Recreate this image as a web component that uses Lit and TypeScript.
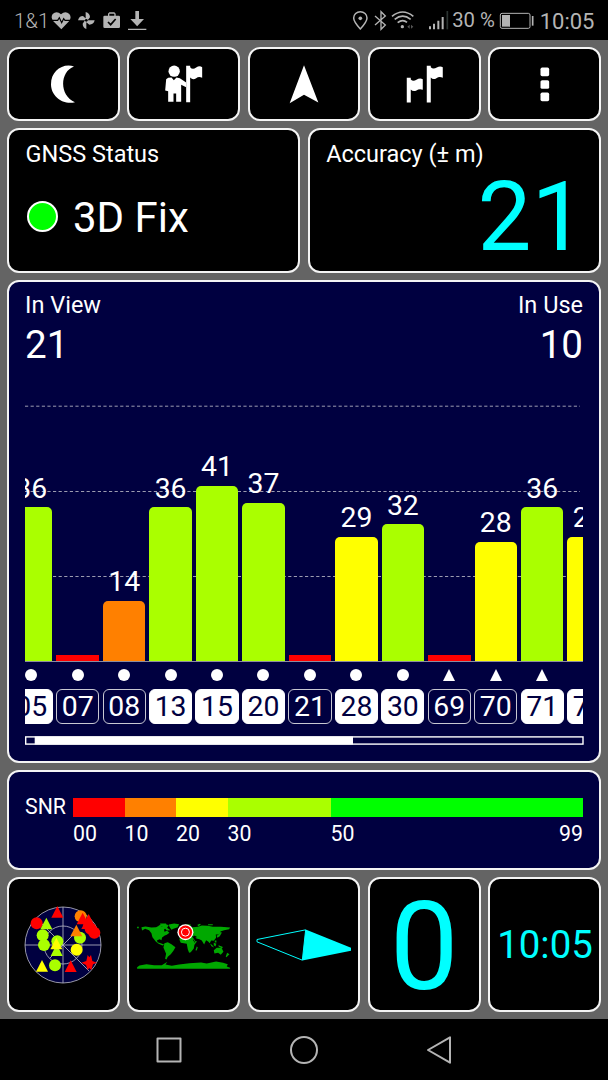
import { LitElement, html, css, svg } from "lit";
import { customElement, property } from "lit/decorators.js";
import { classMap } from "lit/directives/class-map.js";

type Sat = { id: string; snr: number; used: boolean; kind: "dot" | "tri" };

const SATS: Sat[] = [
  { id: "05", snr: 36, used: true, kind: "dot" },
  { id: "07", snr: 0, used: false, kind: "dot" },
  { id: "08", snr: 14, used: false, kind: "dot" },
  { id: "13", snr: 36, used: true, kind: "dot" },
  { id: "15", snr: 41, used: true, kind: "dot" },
  { id: "20", snr: 37, used: true, kind: "dot" },
  { id: "21", snr: 0, used: false, kind: "dot" },
  { id: "28", snr: 29, used: true, kind: "dot" },
  { id: "30", snr: 32, used: true, kind: "dot" },
  { id: "69", snr: 0, used: false, kind: "tri" },
  { id: "70", snr: 28, used: false, kind: "tri" },
  { id: "71", snr: 36, used: true, kind: "tri" },
  { id: "72", snr: 29, used: true, kind: "tri" },
];

const PX_PER_DB = 4.265;

const snrColor = (v: number) =>
  v < 10 ? "#ff0000" : v < 20 ? "#ff8000" : v < 30 ? "#ffff00" : v < 50 ? "#aaff00" : "#00ff00";

@customElement("sat-chart")
class SatChart extends LitElement {
  @property({ attribute: false }) sats: Sat[] = [];

  static styles = css`
    :host { display: block; }
    .view { display: grid; overflow: hidden; height: 330px; width: 558px; }
    .grid, .cols { grid-area: 1 / 1; }
    .grid { display: block; width: 558px; height: 330px; }
    .cols { display: flex; gap: 4px; margin-left: -15px; }
    .col { flex: none; width: 42.46px; display: flex; flex-direction: column; align-items: center; }
    .plot { height: 267px; width: 100%; display: flex; flex-direction: column; justify-content: flex-end; align-items: center; }
    .val { font-size: 28.4px; line-height: 28px; margin-bottom: 4.8px; }
    .bar { width: 42.5px; border-radius: 5px 5px 0 0; flex: none; }
    .bar.low { border-radius: 0; }
    .mark { width: 12px; height: 12px; margin: 8px 0 8px; display: block; flex: none; }
    .id {
      box-sizing: border-box; width: 43.2px; height: 35px; flex: none; border: 1px solid #c8c8d2; border-radius: 6px;
      display: flex; align-items: center; justify-content: center; font-size: 28.4px; line-height: 33px; padding-top: 1px;
    }
    .id.used { background: #fff; border-color: #fff; color: #000040; }
    .scroll { display: block; width: 559px; height: 9px; margin-top: 12px; }
  `;

  render() {
    return html`
      <div class="view">
        <svg class="grid" viewBox="0 0 558 330">
          <g stroke="#9c9cb0" stroke-width="1" stroke-dasharray="3.2 2.4">
            <path d="M0 12.2H555M0 97.5H555M0 182.5H555" />
          </g>
          <path d="M0 267.5H558" stroke="#8c8ca0" stroke-width="1" />
        </svg>
        <div class="cols">
          ${this.sats.map(
            (s) => html`<div class="col">
              <div class="plot">
                ${s.snr ? html`<span class="val">${s.snr}</span>` : null}
                <div
                  class=${classMap({ bar: true, low: !s.snr })}
                  style="height:${s.snr ? s.snr * PX_PER_DB : 5.6}px;background:${snrColor(s.snr)}"
                ></div>
              </div>
              <svg class="mark" viewBox="0 0 12 12" fill="#fff">
                ${s.kind === "dot" ? svg`<circle cx="6" cy="6" r="6"/>` : svg`<path d="M6 0L12 12H0z"/>`}
              </svg>
              <div class=${classMap({ id: true, used: s.used })}>${s.id}</div>
            </div>`
          )}
        </div>
      </div>
      <svg class="scroll" viewBox="0 0 559 9">
        <rect x="0.7" y="0.9" width="557.3" height="7.2" fill="none" stroke="#fff" stroke-width="1.4" />
        <path d="M9.700 0.500H328V8.500H9.700z" fill="#fff" />
      </svg>
    `;
  }
}

const tri = (x: number, y: number, c: string) => svg`<path d="M${x} ${y - 18}L${x + 18} ${y + 17}H${x - 18}z" fill=${c}/>`;
const dot = (x: number, y: number, c: string) => svg`<circle cx=${x} cy=${y} r="18" fill=${c}/>`;
const R = "#ff0000", G = "#aaff00", Y = "#ffff00", O = "#ff8000";

@customElement("app-root")
class AppRoot extends LitElement {
  static styles = css`
    :host {
      display: flex; flex-direction: column; width: 608px; height: 1080px; overflow: hidden;
      background: #000; color: #fff; font-family: Roboto, sans-serif; line-height: 1;
    }
    svg { display: block; flex: none; }
    .status { height: 40px; display: flex; justify-content: space-between; color: #b4b4b4; font-weight: 300; }
    .side { display: flex; align-items: center; height: 41px; }
    .left { padding-left: 14px; }
    .right { padding-right: 13.5px; }
    .right svg:first-child { margin-right: -1px; }
    .carrier { font-size: 20.5px; width: 35.7px; padding-top: 2px; }
    .pct { font-size: 20.3px; font-weight: 400; width: 47px; height: 22px; white-space: nowrap; }
    .clock { font-size: 22px; font-weight: 400; margin-left: 4.5px; padding-top: 2px; }
    .main {
      height: 979px; box-sizing: border-box; background: #646464; padding: 7.3px 7px 0;
      display: grid; grid-template-rows: 74.2px 144.4px 483.2px 99.8px 135.5px; row-gap: 6.95px; align-content: start;
    }
    .row { display: grid; column-gap: 7.3px; }
    .five { grid-template-columns: repeat(5, 1fr); }
    .two { grid-template-columns: 1fr 1fr; }
    .card { box-sizing: border-box; border: 2px solid #f4f4f4; border-radius: 12px; background: #000; min-width: 0; }
    .mid { display: flex; align-items: center; justify-content: center; }
    .low { padding-top: 1.5px; }
    .navy { background: #000040; padding-left: 16px; padding-right: 16px; }
    .title { font-size: 23.5px; line-height: 28px; }
    .info { padding: 9.5px 16.5px 0; }
    .fix { display: flex; align-items: center; margin-top: 25px; gap: 15.5px; }
    .led { box-sizing: border-box; width: 31px; height: 31px; border-radius: 50%; border: 2px solid #fff; background: #00ff00; margin: -3px 0 0 1px; }
    .fixtext { font-size: 42px; line-height: 50px; }
    .acc { color: #00ffff; font-size: 96px; line-height: 96px; text-align: right; margin: 1px -3px 0 0; }
    .pair { display: flex; justify-content: space-between; }
    .head { padding-top: 9px; height: 28px; }
    .num { font-size: 38.6px; line-height: 44px; height: 71.2px; padding-top: 4px; }
    .snr { display: flex; padding-top: 26px; }
    .snrlabel { font-size: 21.3px; line-height: 17px; width: 48px; }
    .scale { flex: 1; }
    .bands { display: grid; grid-template-columns: 10fr 10fr 10fr 20fr 49fr; height: 19px; }
    .b0 { background: #ff0000; } .b1 { background: #ff8000; } .b2 { background: #ffff00; }
    .b3 { background: #aaff00; } .b4 { background: #00ff00; }
    .ticks { display: grid; grid-template-columns: 10fr 10fr 10fr 20fr 24.5fr 24.5fr; font-size: 21.3px; line-height: 24px; margin-top: 5.5px; }
    .end { text-align: right; }
    .zero { color: #00ffff; font-size: 122.5px; padding-top: 5px; }
    .time { color: #00ffff; font-size: 38.4px; padding-left: 1px; padding-top: 2px; }
    .nav { flex: 1; display: flex; align-items: center; justify-content: center; }
  `;

  render() {
    return html`
      <div class="status">
        <div class="side left">
          <span class="carrier">1&amp;1</span>
          <svg width="100" height="22" viewBox="150 30 300 66" fill="#b4b4b4">
            <path d="M184 88L160 64Q151 52 158 42Q170 31 183 43Q196 31 208 42Q216 52 207 64z" />
            <path d="M155 61H173L178 53L185 68L191 56L195 61H212" fill="none" stroke="#000" stroke-width="3.5" />
            <path d="M257 61V36Q270 40 270 52L263 61zM259 61H284Q281 74 268 74L259 67zM259 61V87Q248 83 248 71L254 62zM259 61H234Q237 48 249 48L259 57z" />
            <circle cx="259" cy="61" r="4" fill="#000" />
            <path fill-rule="evenodd" d="M314 47H324V41L328 37H343L347 41V47H356Q360 47 360 51V80Q360 84 356 84H314Q310 84 310 80V51Q310 47 314 47zM328 47H343V41H328z" />
            <path d="M324 66L332 74L347 57" fill="none" stroke="#000" stroke-width="5" />
            <path d="M406 33H417V57H432L411.500 79L391 57H406zM384 86H439V90H384z" />
          </svg>
        </div>
        <div class="side right">
          <svg width="101" height="22" viewBox="144 30 303 66" fill="none" stroke="#b4b4b4" stroke-width="4.500">
            <path d="M169 87Q149 65 149 54A20 19 0 0 1 189 54Q189 65 169 87z" />
            <circle cx="169" cy="55" r="5.500" fill="#b4b4b4" stroke="none" />
            <path d="M213 48L244 75L231 88V35L244 48L213 75" stroke-width="4" />
            <path d="M264 49Q296 23 328 49M272 58Q296 39 320 58M281 68Q296 56 309 67" stroke-width="5" />
            <circle cx="295" cy="80" r="5" fill="#b4b4b4" stroke="none" />
            <path d="M310 80l7-6v12zM328 80l-7-6v12z" fill="#555" stroke="none" />
            <path d="M378 79V88M390 71V88M403 62V88M416 51V88" stroke-width="6" />
            <path d="M430 33V88" stroke="#2c3432" stroke-width="5" />
          </svg>
          <span class="pct">30 %</span>
          <svg width="36" height="18" viewBox="585 33 108 54">
            <rect x="589" y="37" width="89" height="45" rx="5" fill="none" stroke="#b4b4b4" stroke-width="3" />
            <path d="M594 42H618V77H594z" fill="#b4b4b4" />
            <path d="M686 45V74" stroke="#b4b4b4" stroke-width="5" />
          </svg>
          <span class="clock">10:05</span>
        </div>
      </div>

      <div class="main">
        <div class="row five">
          <div class="card mid">
            <svg width="40" height="40" viewBox="129 192.6 120 120" fill="#fff">
              <path d="M222 200C180 215 176 286 225 307C190 316 153 290 153 253C153 215 187 189 222 200z" />
            </svg>
          </div>
          <div class="card mid">
            <svg width="40" height="40" viewBox="491.5 192.6 120 120" fill="#fff">
              <circle cx="522" cy="214" r="17" />
              <path d="M504 234L514 233L521 241L529 233L539 235L558 248V262L543 255V306H528V281H520V306H504V274L495 272L498 238z" />
              <path d="M558 198H570V202Q577 211 588 203Q598 196 606 202V234Q596 229 588 235Q578 242 570 233V307H558z" />
            </svg>
          </div>
          <div class="card mid">
            <svg width="40" height="40" viewBox="852 192.6 120 120" fill="#fff">
              <path d="M912 196L955 308L912 285L869 310z" />
            </svg>
          </div>
          <div class="card mid">
            <svg width="40" height="40" viewBox="300.700 192.6 120 120" fill="#fff">
              <path d="M309 234H321V239Q328 246 338 240Q348 233 357 238V270Q347 266 338 272Q328 277 321 269V308H309z" />
              <path d="M369 198H381V202Q388 210 399 203Q409 197 417 202V234Q407 229 398 235Q388 241 381 233V308H369z" />
            </svg>
          </div>
          <div class="card mid">
            <svg width="40" height="40" viewBox="661.5 192.6 120 120" fill="#fff">
              <rect x="708" y="203" width="26" height="26" rx="5" />
              <rect x="708" y="241" width="26" height="26" rx="5" />
              <rect x="708" y="278" width="26" height="26" rx="5" />
            </svg>
          </div>
        </div>

        <div class="row two">
          <div class="card info">
            <div class="title">GNSS Status</div>
            <div class="fix"><div class="led"></div><div class="fixtext">3D Fix</div></div>
          </div>
          <div class="card info">
            <div class="title">Accuracy (± m)</div>
            <div class="acc">21</div>
          </div>
        </div>

        <div class="card navy">
          <div class="pair title head"><span>In View</span><span>In Use</span></div>
          <div class="pair num"><span>21</span><span>10</span></div>
          <sat-chart .sats=${SATS}></sat-chart>
        </div>

        <div class="card navy snr">
          <div class="snrlabel">SNR</div>
          <div class="scale">
            <div class="bands">
              <div class="b0"></div><div class="b1"></div><div class="b2"></div><div class="b3"></div><div class="b4"></div>
            </div>
            <div class="ticks">
              <span>00</span><span>10</span><span>20</span><span>30</span><span>50</span><span class="end">99</span>
            </div>
          </div>
        </div>

        <div class="row five">
          <div class="card mid low">
            <svg width="90" height="90" viewBox="-5 -2 270 270">
              <circle cx="130" cy="133" r="114" fill="#000040" />
              <g fill="none" stroke="#b4b4c4" stroke-width="2.5">
                <circle cx="130" cy="133" r="114" /><circle cx="130" cy="133" r="57" />
                <path d="M16 133H244M130 19V247M130 133L208 211M130 133L50 53M130 133L170 93M130 133L90 173" />
              </g>
              ${dot(183, 47, O)}${dot(181, 111, G)}${dot(51, 68, R)}${dot(69, 104, G)}${dot(73, 133, G)}${dot(113, 122, G)}
              ${tri(113, 34, R)}${tri(80, 69, G)}${tri(111, 149, G)}${tri(110, 129, Y)}${dot(171, 147, Y)}
              ${tri(189, 54, R)}${tri(207, 58, R)}${tri(203, 68, R)}${dot(213, 84, R)}${dot(224, 96, R)}
              ${tri(170, 90, O)}${tri(67, 196, Y)}${dot(106, 194, G)}${tri(153, 197, R)}
              <path d="M204 163L209 170L214 163L218 181L232 186L220 191L215 208L209 202L204 208L199 193L185 186L200 181z" fill="#ff0000" />
            </svg>
          </div>
          <div class="card mid low">
            <svg width="100" height="60" viewBox="-0.3 -1.5 300 180" fill="#00a800">
              <path d="M9 34h5v4H9zM22 35L34 33L52 36L66 35L76 30L85 34L96 36L90 42L91 49L99 46L106 52L98 58L92 60L84 66L82 74L77 71L69 74L70 80L80 83L91 88L85 90L72 84L65 78L55 65L52 53L45 44L33 40L24 45z" />
              <path d="M73 29L92 25L104 29L99 37L109 44L98 45L90 36zM104 27L120 24L135 26L131 35L118 40L112 43L106 34zM78 24h18v3H78z" />
              <path d="M91 83L101 80L112 86L124 95L118 106L110 116L101 124L97 132L93 130L96 115L88 96z" />
              <path d="M138 63L150 58L176 65L184 77H189L181 88L179 99L170 110L165 112L161 101L158 85L140 82L136 73zM188 93l3 2l-3 10l-4-1z" />
              <path d="M137 52L143 43L151 34L165 32L176 35L191 34L203 30L221 31L236 34L260 34L288 36L285 41L270 44L259 48L256 57L245 57L246 67L239 76L231 75L227 83L222 78L216 74L210 87L203 75L196 71L187 69L181 62L174 63L162 60L151 57L137 61z" />
              <path d="M247 61L253 58L260 49L263 52L257 62L250 67zM228 84L235 89L240 96L232 92zM239 82l8 3l-3 8l-5-4zM253 89l12 5l1 4l-12-4zM239 104L248 97L262 96L268 109L260 118L252 112L241 114zM279 112l7 4l-9 9l-2-2zM242 75h5v6h-5zM154 27h16v4h-16zM190 28l8-3l2 3l-8 4zM222 26h14v3h-14z" />
              <path d="M9 155L16 150L37 146L60 149L83 149L100 139L94 147L113 151L135 147L166 143L201 141L218 144L246 138L267 142L281 146L278 153L288 157V160H9z" />
              <path d="M180 60l8 4l-2 3l-8-4zM178 72l5 8l-1 2l-6-9z" fill="#000" />
              <circle cx="154" cy="50" r="24" fill="#fff" />
              <circle cx="154" cy="50" r="20" fill="#f00" />
              <circle cx="154" cy="50" r="12" fill="none" stroke="#fff" stroke-width="3" />
            </svg>
          </div>
          <div class="card mid low">
            <svg width="100" height="40" viewBox="402 163.500 300 120">
              <path d="M557 178L411 207V214L547 269z" fill="none" stroke="#00ffff" stroke-width="3" />
              <path d="M557 177L693 232V241L547 270z" fill="#00ffff" />
            </svg>
          </div>
          <div class="card mid zero"><span>0</span></div>
          <div class="card mid time"><span>10:05</span></div>
        </div>
      </div>

      <div class="nav">
        <svg width="300" height="32" viewBox="0 0 300 32" fill="none" stroke="#b4b4b4" stroke-width="2" stroke-linejoin="round">
          <rect x="3.500" y="4.500" width="23" height="23" />
          <circle cx="150" cy="16" r="13" />
          <path d="M274 16L296 3.300V28.700z" />
        </svg>
      </div>
    `;
  }
}
